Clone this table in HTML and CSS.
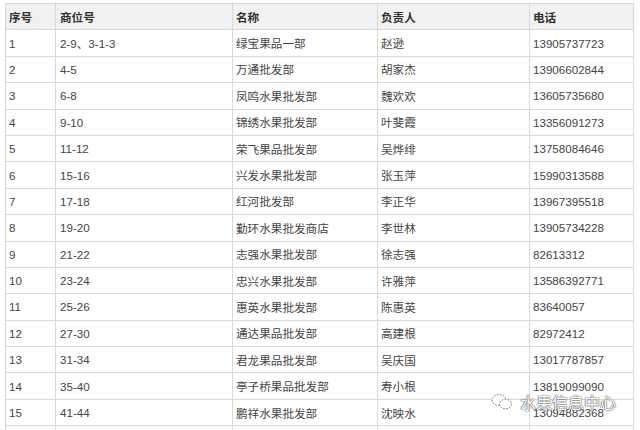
FILE: index.html
```html
<!DOCTYPE html>
<html lang="zh">
<head>
<meta charset="utf-8">
<link rel="stylesheet" href="styles.css">
</head>
<body>
<div class="page">
<table class="grid">
<colgroup><col class="c1"><col class="c2"><col class="c3"><col class="c4"><col class="c5"></colgroup>
<thead>
<tr><th>序号</th><th>商位号</th><th>名称</th><th>负责人</th><th>电话</th></tr>
</thead>
<tbody>
<tr><td>1</td><td>2-9、3-1-3</td><td>绿宝果品一部</td><td>赵逊</td><td>13905737723</td></tr>
<tr><td>2</td><td>4-5</td><td>万通批发部</td><td>胡家杰</td><td>13906602844</td></tr>
<tr><td>3</td><td>6-8</td><td>凤鸣水果批发部</td><td>魏欢欢</td><td>13605735680</td></tr>
<tr><td>4</td><td>9-10</td><td>锦绣水果批发部</td><td>叶斐霞</td><td>13356091273</td></tr>
<tr><td>5</td><td>11-12</td><td>荣飞果品批发部</td><td>吴烨绯</td><td>13758084646</td></tr>
<tr><td>6</td><td>15-16</td><td>兴发水果批发部</td><td>张玉萍</td><td>15990313588</td></tr>
<tr><td>7</td><td>17-18</td><td>红河批发部</td><td>李正华</td><td>13967395518</td></tr>
<tr><td>8</td><td>19-20</td><td>勤环水果批发商店</td><td>李世林</td><td>13905734228</td></tr>
<tr><td>9</td><td>21-22</td><td>志强水果批发部</td><td>徐志强</td><td>82613312</td></tr>
<tr><td>10</td><td>23-24</td><td>忠兴水果批发部</td><td>许雅萍</td><td>13586392771</td></tr>
<tr><td>11</td><td>25-26</td><td>惠英水果批发部</td><td>陈惠英</td><td>83640057</td></tr>
<tr><td>12</td><td>27-30</td><td>通达果品批发部</td><td>高建根</td><td>82972412</td></tr>
<tr><td>13</td><td>31-34</td><td>君龙果品批发部</td><td>吴庆国</td><td>13017787857</td></tr>
<tr><td>14</td><td>35-40</td><td>亭子桥果品批发部</td><td>寿小根</td><td>13819099090</td></tr>
<tr><td>15</td><td>41-44</td><td>鹏祥水果批发部</td><td>沈映水</td><td>13094882368</td></tr>
<tr><td></td><td></td><td></td><td></td><td></td></tr>
</tbody>
</table>
<div class="mark">
<svg class="mark-icon" width="22" height="18" viewBox="0 0 22 18">
<ellipse cx="8" cy="7" rx="7" ry="5.5" fill="#fff" stroke="#777" stroke-width="1" stroke-dasharray="1.6 1.4"/>
<ellipse cx="14.5" cy="11" rx="6" ry="4.8" fill="#fff" stroke="#777" stroke-width="1" stroke-dasharray="1.6 1.4"/>
</svg>
<span class="mark-text">水果信息中心</span>
</div>
</div>
</body>
</html>
```
FILE: styles.css
```css
html, body {
  margin: 0;
  padding: 0;
  background: #fff;
  overflow: hidden;
}
.page {
  position: relative;
  width: 640px;
  height: 430px;
  overflow: hidden;
  padding: 3px 0 0 5px;
  box-sizing: border-box;
}
.grid {
  border-collapse: collapse;
  table-layout: fixed;
  width: 628px;
  font-family: "Liberation Sans", "Noto Sans CJK SC", sans-serif;
  font-size: 11.6px;
  color: #444;
}
.c1 { width: 50px; }
.c2 { width: 177px; }
.c3 { width: 145px; }
.c4 { width: 152px; }
.c5 { width: 104px; }
.grid th, .grid td {
  border: 1px solid #d9d9d9;
  height: 26.4px;
  padding: 0 0 0 3px;
  box-sizing: border-box;
  text-align: left;
  vertical-align: middle;
  white-space: nowrap;
  overflow: hidden;
}
.grid td:nth-child(2), .grid th:nth-child(2) { padding-left: 4px; }
.grid th {
  background: #f1f1f1;
  font-weight: bold;
  color: #333;
}
.mark {
  position: absolute;
  left: 491px;
  top: 393px;
  display: flex;
  align-items: center;
  gap: 7px;
}
.mark-icon { display: block; }
.mark-text {
  font-family: "Noto Sans CJK SC", sans-serif;
  font-size: 16px;
  line-height: 18px;
  color: #fff;
  text-shadow: 0 0 1px #555, 0 0 1px #555, 0 0 2px #888;
}
```
